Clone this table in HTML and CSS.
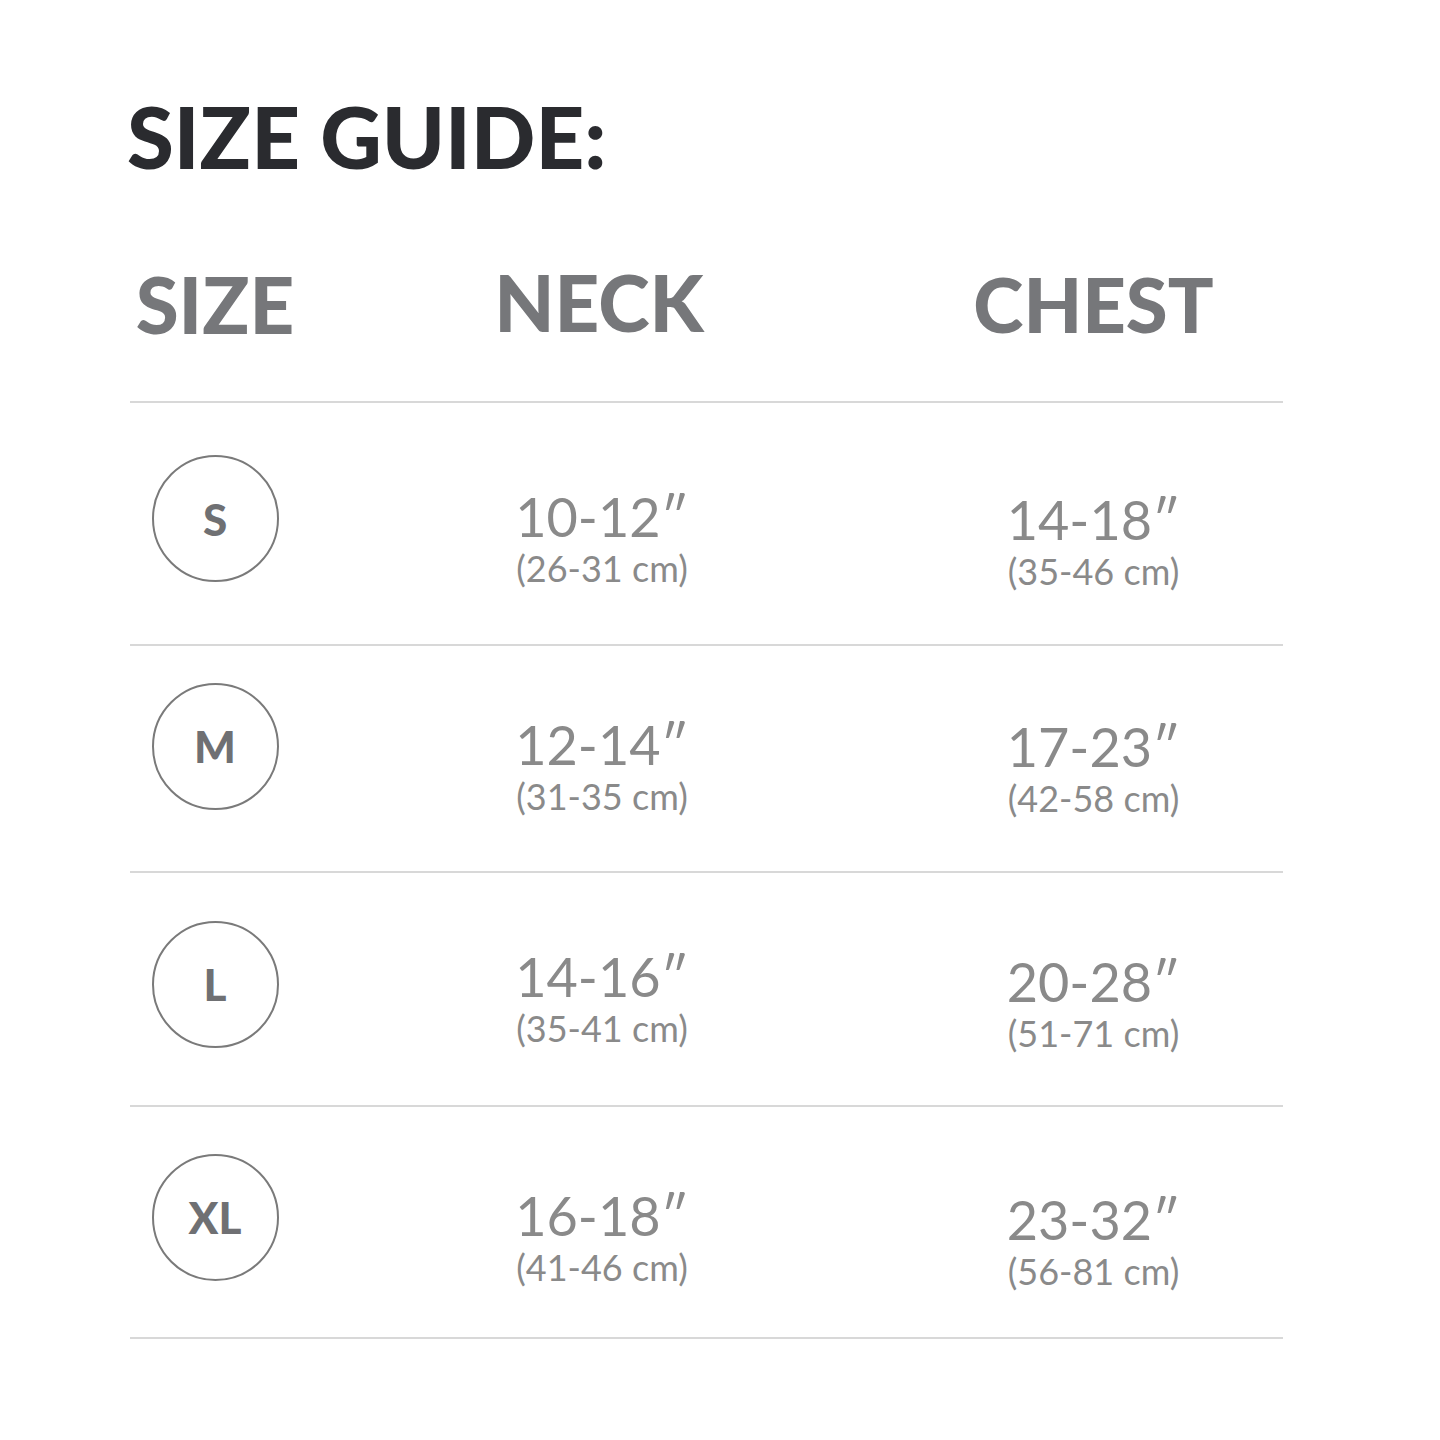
FILE: index.html
```html
<!DOCTYPE html>
<html>
<head>
<meta charset="utf-8">
<link rel="stylesheet" href="styles.css">
</head>
<body>
<main class="page">
  <h1 class="title">SIZE GUIDE:</h1>
  <div class="table">
    <div class="head">
      <div class="hcell c1">SIZE</div>
      <div class="hcell c2">NECK</div>
      <div class="hcell c3">CHEST</div>
    </div>
    <div class="row r1">
      <div class="cell"><span class="badge">S</span></div>
      <div class="cell txt"><div class="val">10-12″</div><div class="sub">(26-31 cm)</div></div>
      <div class="cell txt chest"><div class="val">14-18″</div><div class="sub">(35-46 cm)</div></div>
    </div>
    <div class="row r2">
      <div class="cell"><span class="badge">M</span></div>
      <div class="cell txt"><div class="val">12-14″</div><div class="sub">(31-35 cm)</div></div>
      <div class="cell txt chest"><div class="val">17-23″</div><div class="sub">(42-58 cm)</div></div>
    </div>
    <div class="row r3">
      <div class="cell"><span class="badge">L</span></div>
      <div class="cell txt"><div class="val">14-16″</div><div class="sub">(35-41 cm)</div></div>
      <div class="cell txt chest"><div class="val">20-28″</div><div class="sub">(51-71 cm)</div></div>
    </div>
    <div class="row r4">
      <div class="cell"><span class="badge">XL</span></div>
      <div class="cell txt"><div class="val">16-18″</div><div class="sub">(41-46 cm)</div></div>
      <div class="cell txt chest"><div class="val">23-32″</div><div class="sub">(56-81 cm)</div></div>
    </div>
  </div>
</main>
</body>
</html>
```
FILE: styles.css
```css
html, body {
  margin: 0;
  padding: 0;
  background: #ffffff;
}
.page {
  width: 1440px;
  height: 1440px;
  box-sizing: border-box;
  padding: 88px 0 0 127px;
  font-family: "Lato", "Liberation Sans", sans-serif;
}
.title {
  margin: 0;
  font-size: 85px;
  font-weight: 900;
  line-height: 96px;
  color: #2a2b2f;
  letter-spacing: 0;
}
.table {
  width: 1153px;
  margin-left: 3px;
  margin-top: 78px;
}
.head {
  display: grid;
  grid-template-columns: 170px 604px 379px;
  height: 141px;
  border-bottom: 2px solid #d8d8d8;
  box-sizing: border-box;
}
.hcell {
  text-align: center;
  font-size: 78px;
  font-weight: 900;
  color: #76777a;
  line-height: 80px;
  padding-top: 2px;
}
.hcell.c2 { padding-top: 0; margin-left: -6px; }
.hcell.c3 { font-size: 76px; }
.row {
  display: grid;
  grid-template-columns: 170px 604px 379px;
  align-items: center;
  border-bottom: 2px solid #d8d8d8;
  box-sizing: border-box;
  padding-bottom: 10px;
}
.r1 { height: 243px; }
.r2 { height: 227px; padding-bottom: 25px; }
.r3 { height: 234px; }
.r4 { height: 232px; }
.cell {
  display: flex;
  flex-direction: column;
  align-items: center;
  justify-content: center;
}
.cell.txt { padding-top: 40px; }
.cell.txt.chest { padding-top: 46px; }
.r2 .cell.txt { padding-top: 42px; }
.r2 .cell.txt.chest { padding-top: 46px; }
.r3 .cell.txt { padding-top: 30px; }
.r3 .cell.txt.chest { padding-top: 40px; }
.r4 .cell.txt { padding-top: 42px; }
.r4 .cell.txt.chest { padding-top: 50px; }
.badge {
  width: 123px;
  height: 123px;
  border: 2px solid #7a7a7a;
  border-radius: 50%;
  display: flex;
  align-items: center;
  justify-content: center;
  font-size: 44px;
  font-weight: 900;
  color: #6f7073;
}
.val {
  font-size: 54px;
  font-weight: 400;
  color: #8a8a8a;
  line-height: 56px;
}
.sub {
  font-size: 36px;
  font-weight: 400;
  color: #8a8a8a;
  line-height: 42px;
  margin-top: 2px;
}
```
